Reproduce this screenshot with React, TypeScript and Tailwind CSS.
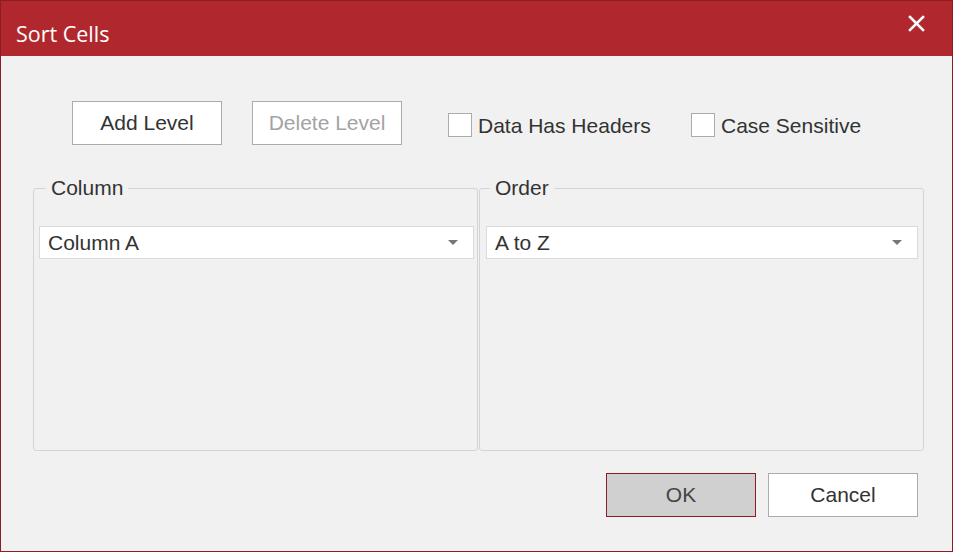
import React from "react";

const arial = { fontFamily: '"Liberation Sans", Arial, sans-serif' } as const;

function Arrow() {
  return (
    <svg width="10" height="5" viewBox="0 0 10 5" className="block">
      <polygon points="0,0 10,0 5,5" fill="#777777" />
    </svg>
  );
}

function Select({ label, w, ml }: { label: string; w: string; ml: string }) {
  return (
    <div
      className={`${w} ${ml} mt-[26px] h-[33px] bg-white border border-[#dadada] flex items-center justify-between pl-[8px] pr-[15px] text-[21px] text-[#333333]`}
    >
      <span className="leading-[24px]">{label}</span>
      <Arrow />
    </div>
  );
}

function Checkbox({ label }: { label: string }) {
  return (
    <div className="flex items-center">
      <div className="w-[24px] h-[24px] bg-white border border-[#ababab]" />
      <span className="ml-[6px] text-[21px] leading-[24px] text-[#333333] mt-[2px]">{label}</span>
    </div>
  );
}

export default function App() {
  return (
    <div
      className="w-[953px] h-[552px] border border-[#8c1c21] bg-[#f1f1f1] flex flex-col overflow-hidden"
      style={arial}
    >
      <div className="h-[55px] bg-[#b0282e] flex justify-between items-start pl-[15px] pr-[27px] shrink-0">
        <div
          className="pt-[19px] text-white text-[21.5px] leading-[28px]"
          style={{ fontFamily: '"Open Sans", "Noto Sans", sans-serif' }}
        >
          Sort Cells
        </div>
        <svg width="17" height="17" viewBox="0 0 17 17" className="mt-[14px]">
          <line x1="2" y1="2" x2="15" y2="15" stroke="white" strokeWidth="2.6" strokeLinecap="square" />
          <line x1="15" y1="2" x2="2" y2="15" stroke="white" strokeWidth="2.6" strokeLinecap="square" />
        </svg>
      </div>

      <div className="mt-[45px] pl-[71px] flex items-center">
        <button className="w-[150px] h-[44px] bg-white border border-[#ababab] text-[21px] text-[#333333] leading-[24px]">
          Add Level
        </button>
        <button className="ml-[30px] w-[150px] h-[44px] bg-white border border-[#ababab] text-[21px] text-[#a3a3a3] leading-[24px]">
          Delete Level
        </button>
        <div className="ml-[46px] w-[243px] mt-[3px]">
          <Checkbox label="Data Has Headers" />
        </div>
        <div className="mt-[3px]">
          <Checkbox label="Case Sensitive" />
        </div>
      </div>

      <div className="mt-[31px] pl-[32px] flex gap-[1px]">
        <fieldset className="w-[445px] h-[275px] border border-[#d4d4d4] rounded-[3px]">
          <legend className="ml-[12px] px-[5px] text-[21px] leading-[24px] text-[#333333]">Column</legend>
          <Select label="Column A" w="w-[435px]" ml="ml-[5px]" />
        </fieldset>
        <fieldset className="w-[445px] h-[275px] border border-[#d4d4d4] rounded-[3px]">
          <legend className="ml-[10px] px-[5px] text-[21px] leading-[24px] text-[#333333]">Order</legend>
          <Select label="A to Z" w="w-[432px]" ml="ml-[6px]" />
        </fieldset>
      </div>

      <div className="mt-[22px] pr-[34px] flex justify-end gap-[12px]">
        <button className="w-[150px] h-[44px] bg-[#d0d0d0] border border-[#8c1c21] text-[21px] text-[#444444] leading-[24px]">
          OK
        </button>
        <button className="w-[150px] h-[44px] bg-white border border-[#ababab] text-[21px] text-[#333333] leading-[24px]">
          Cancel
        </button>
      </div>
    </div>
  );
}
